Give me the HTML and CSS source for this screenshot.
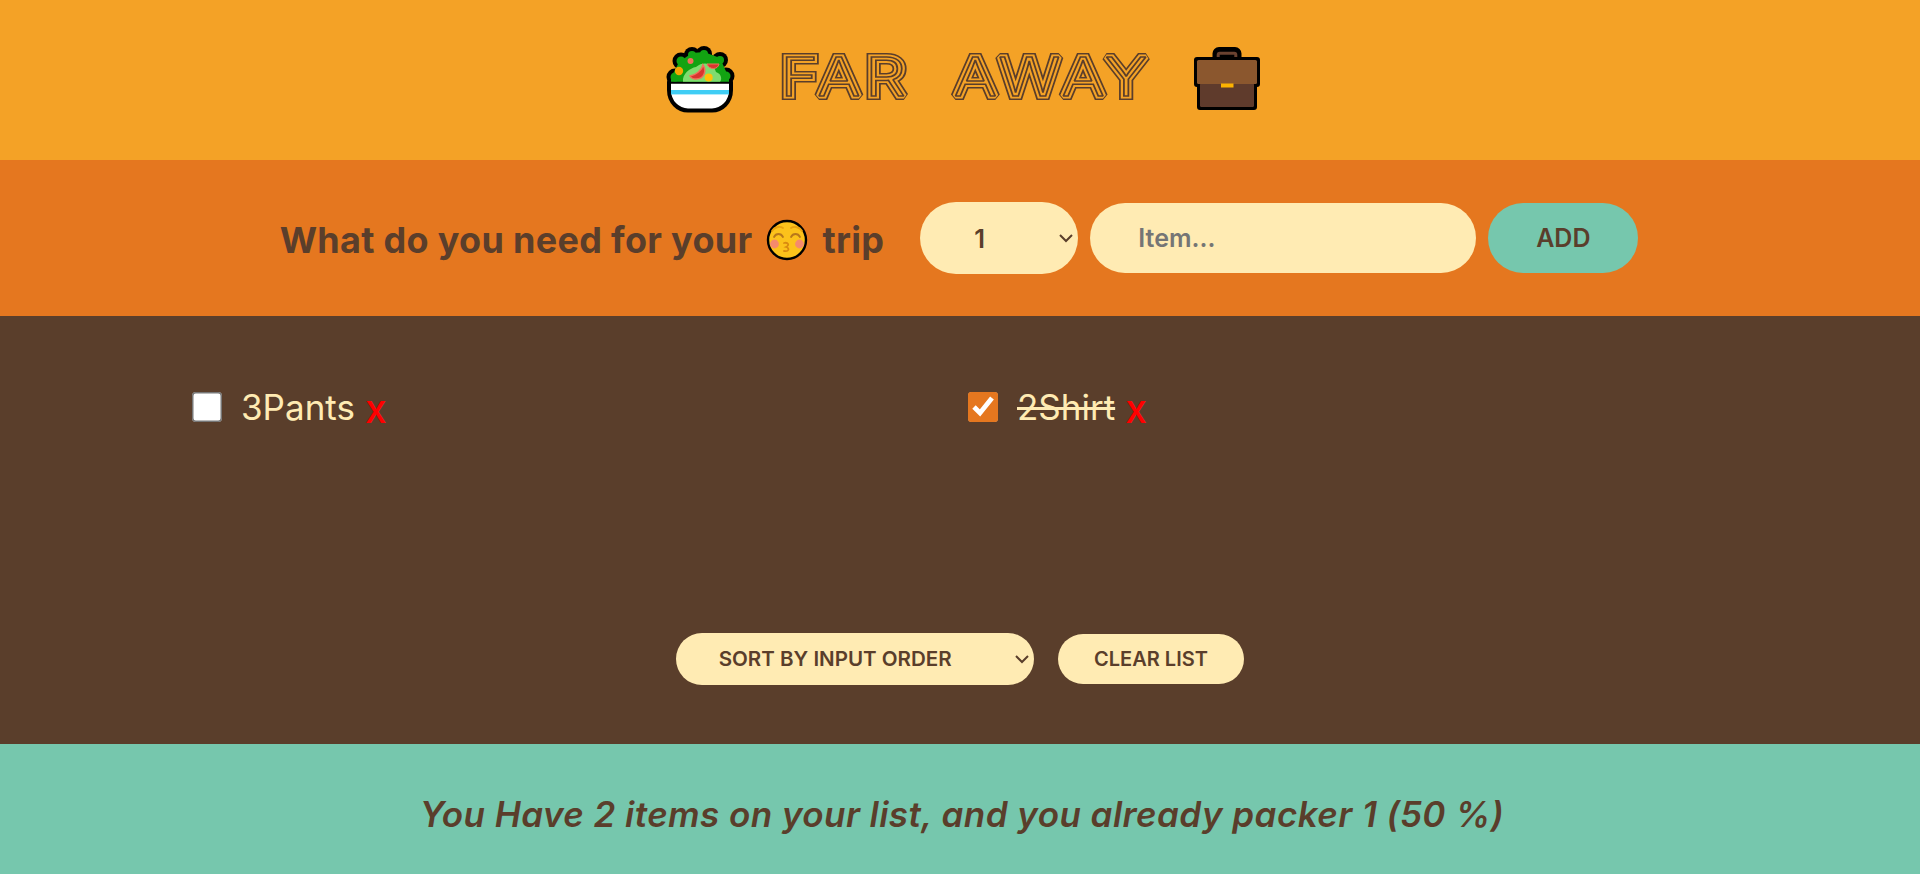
FILE: index.html
```html
<!DOCTYPE html>
<html lang="en">
<head>
    <meta charset="UTF-8">
    <meta name="viewport" content="width=device-width, initial-scale=1.0">
    <title>Far Away</title>
    <link rel="stylesheet" href="styles.css">
</head>
<body>
    <div class="app">
        <header class="header">
            <svg class="emoji-big" viewBox="0 0 80 80" aria-hidden="true">
                <g fill="#000">
                    <circle cx="15" cy="37" r="8.5"/>
                    <circle cx="21" cy="21" r="8.5"/>
                    <circle cx="32" cy="15" r="8"/>
                    <circle cx="44" cy="14" r="8"/>
                    <circle cx="60" cy="20" r="8"/>
                    <circle cx="66" cy="36" r="8.5"/>
                    <circle cx="39" cy="30" r="20"/>
                </g>
                <path d="M9 41.7 H71 V50 C71 62 62 70.5 52 70.5 H28 C18 70.5 9 62 9 50Z" fill="#fff" stroke="#000" stroke-width="4" stroke-linejoin="round"/>
                <g fill="#12a312">
                    <circle cx="15" cy="37" r="4.5"/>
                    <circle cx="21" cy="21" r="4.5"/>
                    <circle cx="32" cy="15" r="4"/>
                    <circle cx="44" cy="14" r="4"/>
                    <circle cx="60" cy="20" r="4"/>
                    <circle cx="66" cy="36" r="4.5"/>
                    <path d="M11 41.8 V38 L19 22 L32 13 L44 12 L60 18 L69 38 V41.8Z"/>
                </g>
                <path d="M23 41.8 C22 34 30 28 36 27 C44 20 54 24 56 32 C62 34 62 40 60 41.8Z" fill="#7fdc6f"/>
                <circle cx="19" cy="31" r="4.2" fill="#f5a500"/>
                <circle cx="30.5" cy="21" r="3" fill="#f0705a"/>
                <circle cx="48.7" cy="37.5" r="4" fill="#ffc107"/>
                <path d="M30 36 C36 35 42 30 43 25 C47 31 44 39 36 39 C33 39 31 38 30 36Z" fill="#d9352e" stroke="#f0705a" stroke-width="1.5"/>
                <path d="M47 24 H59 C58 30 49 30 47 24Z" fill="#d9352e" stroke="#f0705a" stroke-width="1"/>
                <rect x="11" y="50" width="58" height="4.4" fill="#3fcdf5"/>
            </svg>
            <h1 class="title">
                <svg class="title-art" viewBox="0 0 402 80">
                    <g transform="translate(16.5 55.5) scale(1.19 1)">
                        <use href="#titleText" class="line-outer"/>
                        <use href="#titleText" class="line-gap"/>
                        <g class="line-inner"><text id="titleText" class="title-text">FAR AWAY</text></g>
                    </g>
                </svg>
            </h1>
            <svg class="emoji-big" viewBox="0 0 80 80" aria-hidden="true">
                <rect x="26" y="10.5" width="22" height="12" rx="3" fill="#000" stroke="#000" stroke-width="7"/>
                <rect x="28.2" y="13.3" width="17.6" height="10" rx="1.5" fill="#000" stroke="#6a4230" stroke-width="3"/>
                <path d="M7 20 H67 V44 H64 V67 H10 V44 H7Z" fill="#000" stroke="#000" stroke-width="6" stroke-linejoin="round"/>
                <rect x="10" y="43" width="54" height="24" rx="1.5" fill="#5f3b2c"/>
                <rect x="7" y="20" width="60" height="24" rx="1.5" fill="#8b572e"/>
                <rect x="31" y="43.5" width="12.5" height="4" fill="#fdb300"/>
            </svg>
        </header>

        <form class="add-form">
            <h3 class="add-title">
                What do you need for your
                <svg class="emoji-face" viewBox="0 0 42 42" aria-hidden="true">
                    <circle cx="21" cy="21" r="19" fill="#fcc21b" stroke="#000" stroke-width="2.4"/>
                    <path d="M6 12 C8 8 14 7 17 9 M25 9 C28 7 34 8 36 12" fill="none" stroke="#e9a10f" stroke-width="1.8" stroke-linecap="round"/>
                    <path d="M8 18 C10 14 15 14 17 18 M25 18 C27 14 32 14 34 18" fill="none" stroke="#b9781a" stroke-width="1.8" stroke-linecap="round"/>
                    <circle cx="8.5" cy="25" r="4.4" fill="#f58a6d"/>
                    <circle cx="33.5" cy="25" r="4.4" fill="#f58a6d"/>
                    <path d="M18 24 C22 23 24 26 20 28 C24 29 23 33 18 32" fill="none" stroke="#d98a10" stroke-width="1.8" stroke-linecap="round"/>
                </svg>
                trip
            </h3>
            <select class="form-select">
                <option>1</option>
                <option>2</option>
                <option>3</option>
            </select>
            <input class="form-input" type="text" placeholder="Item...">
            <button type="button" class="form-btn">ADD</button>
        </form>

        <main class="list">
            <ul class="items">
                <li class="item">
                    <input type="checkbox" class="item-check">
                    <span class="item-name">3Pants</span>
                    <button type="button" class="item-remove">x</button>
                </li>
                <li class="item">
                    <input type="checkbox" class="item-check" checked>
                    <span class="item-name packed">2Shirt</span>
                    <button type="button" class="item-remove">x</button>
                </li>
            </ul>
            <div class="actions">
                <select class="sort-select">
                    <option>Sort by input order</option>
                    <option>Sort by name</option>
                </select>
                <button type="button" class="clear-btn">Clear list</button>
            </div>
        </main>

        <footer class="stats">You Have 2 items on your list, and you already packer 1 (50 %)</footer>
    </div>
</body>
</html>
```

FILE: styles.css
```css
* {
    box-sizing: border-box;
    margin: 0;
    padding: 0;
}

body {
    font-family: "Inter", "Noto Sans", sans-serif;
    color: #5a3e2b;
}

.app {
    display: grid;
    grid-template-rows: 160px 156px 428px 130px;
    height: 100vh;
    overflow: hidden;
}

/* Header */
.header {
    background-color: #f4a226;
    display: flex;
    justify-content: center;
    align-items: center;
    gap: 24px;
    padding-left: 10px;
}

.emoji-big {
    width: 80px;
    height: 80px;
}

.title {
    font-weight: 300;
    line-height: 0;
}

.title-art {
    width: 402px;
    height: 80px;
}

/* three nested strokes of one text make the inline lines of the logo */
.title-text {
    font-family: "Inter", sans-serif;
    font-size: 54px;
    font-weight: 300;
    letter-spacing: 4px;
    word-spacing: 17px;
}

.line-outer,
.line-gap,
.line-inner {
    fill: #f4a226;
    stroke-linejoin: miter;
    stroke-miterlimit: 1.5;
}

.line-outer {
    stroke: #5a3e2b;
    stroke-width: 8.2px;
}

.line-gap {
    stroke: #f4a226;
    stroke-width: 5.2px;
}

.line-inner {
    stroke: #5a3e2b;
    stroke-width: 1.5px;
}

/* Add form */
.add-form {
    background-color: #e5771f;
    display: flex;
    justify-content: center;
    align-items: center;
    gap: 12px;
    padding-right: 2px;
}

.add-title {
    display: flex;
    align-items: center;
    gap: 14px;
    margin-right: 24px;
    padding-top: 4px;
    font-size: 36px;
    font-weight: 700;
    letter-spacing: 0.3px;
}

.emoji-face {
    width: 42px;
    height: 42px;
}

.form-input,
.form-btn {
    font-family: inherit;
    font-size: 25px;
    font-weight: 600;
    color: #5a3e2b;
    background-color: #ffebb3;
    border: none;
    border-radius: 160px;
    height: 70px;
    padding: 0 48px;
}

/* zoomed so the native arrow comes out at the same size */
.form-select {
    zoom: 1.5;
    font-family: inherit;
    font-size: 17px;
    font-weight: 600;
    color: #5a3e2b;
    background-color: #ffebb3;
    border: none;
    border-radius: 100px;
    width: 105.4px;
    height: 48px;
    padding: 0 32px;
}

.form-input {
    width: 386px;
}

.form-input::placeholder {
    color: #757575;
}

.form-btn {
    width: 150px;
    padding: 0;
    background-color: #76c7ad;
}

/* Packing list */
.list {
    background-color: #5a3e2b;
    color: #ffebb3;
    display: flex;
    flex-direction: column;
    justify-content: space-between;
    align-items: center;
    padding: 69px 0 59px;
}

.items {
    list-style: none;
    width: 80%;
    display: grid;
    grid-template-columns: repeat(2, 1fr);
    gap: 16px;
}

.item {
    display: flex;
    align-items: center;
    gap: 19px;
    height: 44px;
}

.item-check {
    zoom: 1.5;
    width: 20px;
    height: 20px;
    accent-color: #e5771f;
}

.item-name {
    font-size: 35px;
    font-weight: 400;
}

.packed {
    text-decoration: line-through;
}

.item-remove {
    font-family: inherit;
    font-size: 39px;
    font-weight: 500;
    line-height: 1;
    color: #f00;
    background: none;
    border: none;
    margin-left: -9px;
    transform: translateY(1px);
}

.actions {
    display: flex;
    align-items: center;
    gap: 24px;
}

.sort-select {
    zoom: 1.5;
    font-family: inherit;
    font-size: 13.7px;
    font-weight: 600;
    text-transform: uppercase;
    color: #5a3e2b;
    background-color: #ffebb3;
    border: none;
    border-radius: 100px;
    width: 238.7px;
    height: 34.7px;
    padding: 0 24.5px;
}

.clear-btn {
    font-family: inherit;
    font-size: 20px;
    font-weight: 600;
    text-transform: uppercase;
    color: #5a3e2b;
    background-color: #ffebb3;
    border: none;
    border-radius: 160px;
    width: 186px;
    height: 50px;
}

/* Footer */
.stats {
    background-color: #76c7ad;
    display: flex;
    justify-content: center;
    align-items: center;
    padding-top: 10px;
    padding-left: 4px;
    font-size: 35px;
    font-weight: 600;
    font-style: italic;
    letter-spacing: 0.45px;
}
```
